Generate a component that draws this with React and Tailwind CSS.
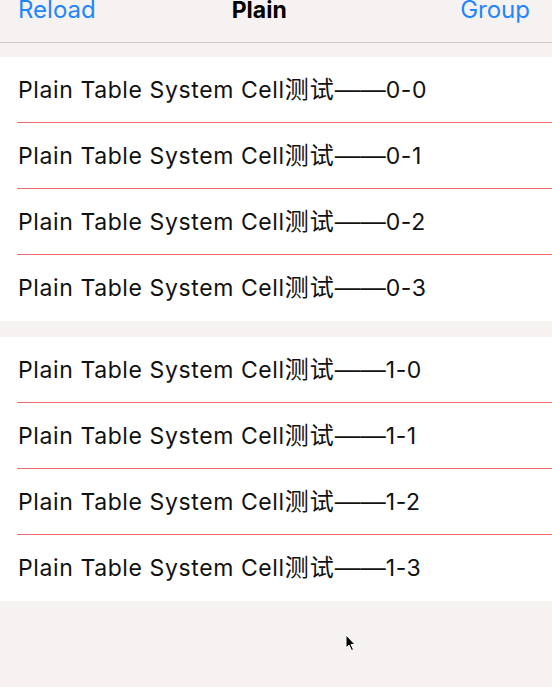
import React from "react";

const font = { fontFamily: "Inter, 'Noto Sans CJK SC', sans-serif" };

function Row({ label, last }) {
  return (
    <div className="h-[66px] flex flex-col bg-white">
      <div className="flex-1 flex items-center pl-[18px] pb-[2px]">
        <p className="text-[23px] leading-[30px] tracking-[0.6px] text-[#111] whitespace-nowrap">
          <span>Plain Table System Cell</span>
          <span className="text-[24px] tracking-[1px]" style={{ fontFamily: "'Noto Sans CJK SC', sans-serif" }}>测试</span>
          <span className="text-[25.5px] tracking-normal" style={{ fontFamily: "'Liberation Sans', sans-serif" }}>——</span>
          <span>{label}</span>
        </p>
      </div>
      {last ? <div className="h-px" /> : <div className="h-px ml-[17px] bg-[#f06c6c]" />}
    </div>
  );
}

export default function App() {
  return (
    <div className="w-[552px] h-[687px] bg-[#f7f2f2] relative overflow-hidden" style={font}>
      <div className="h-[42px] flex items-start border-b border-[#cfc9c9] box-content">
        <span className="ml-[18px] text-[24px] leading-[24px] -mt-[2px] text-[#1f87fb]">Reload</span>
        <span className="ml-[136px] text-[23px] leading-[24px] -mt-[2px] font-bold text-black">Plain</span>
        <span className="ml-auto mr-[22px] text-[24px] leading-[24px] -mt-[2px] text-[#1f87fb]">Group</span>
      </div>
      <div className="h-[14px]" />
      <div>
        {["0-0", "0-1", "0-2", "0-3"].map((l, i) => (
          <Row key={l} label={l} last={i === 3} />
        ))}
      </div>
      <div className="h-[16px]" />
      <div>
        {["1-0", "1-1", "1-2", "1-3"].map((l, i) => (
          <Row key={l} label={l} last={i === 3} />
        ))}
      </div>
      <svg className="absolute left-[345px] top-[634px]" width="12" height="18" viewBox="0 0 12 18">
        <path d="M1 1 L1 14 L4 11 L6.5 16.5 L8.5 15.5 L6 10.5 L10 10.5 Z" fill="#000" stroke="#fff" strokeWidth="1" />
      </svg>
    </div>
  );
}
